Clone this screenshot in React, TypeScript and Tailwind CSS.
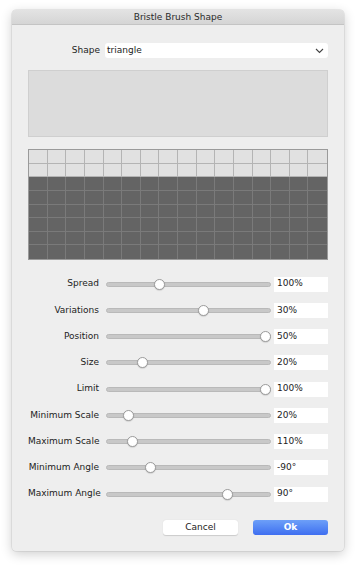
import React from "react";

const rows: { label: string; value: string; pos: number }[] = [
  { label: "Spread", value: "100%", pos: 0.31 },
  { label: "Variations", value: "30%", pos: 0.6 },
  { label: "Position", value: "50%", pos: 1 },
  { label: "Size", value: "20%", pos: 0.2 },
  { label: "Limit", value: "100%", pos: 1 },
  { label: "Minimum Scale", value: "20%", pos: 0.11 },
  { label: "Maximum Scale", value: "110%", pos: 0.135 },
  { label: "Minimum Angle", value: "-90\u00b0", pos: 0.25 },
  { label: "Maximum Angle", value: "90\u00b0", pos: 0.75 },
];

function Slider({ pos }: { pos: number }) {
  return (
    <div className="relative w-[165px] h-[12px] flex items-center">
      <div className="w-full h-[5px] rounded-full bg-[#c8c8c8] border border-[#b9b9b9]" />
      <div
        className="absolute top-[0.5px] w-[11px] h-[11px] rounded-full bg-white border border-[#9d9d9d] shadow-[0_0.5px_1px_rgba(0,0,0,0.2)]"
        style={{ left: `${pos * 154}px` }}
      />
    </div>
  );
}

export default function App() {
  const cells = Array.from({ length: 128 }, (_, i) => i);
  return (
    <div
      className="w-[356px] h-[566px] bg-white pt-[10px] pl-[12px]"
      style={{ fontFamily: '"DejaVu Sans", "Liberation Sans", sans-serif' }}
    >
      <div className="w-[332px] h-[541px] bg-[#eeeeee] rounded-[4px] shadow-[0_3px_12px_rgba(0,0,0,0.2),0_0_0_0.5px_rgba(0,0,0,0.12)] flex flex-col overflow-hidden">
        <div className="h-[15px] bg-gradient-to-b from-[#e3e3e3] to-[#d5d5d5] border-b border-[#c4c4c4] flex items-center justify-center text-[9px] leading-none text-[#2a2a2a]">
          Bristle Brush Shape
        </div>
        <div className="px-4 flex flex-col">
          <div className="mt-[18px] flex items-center gap-[5px] h-[15px]">
            <div className="w-[72px] text-right text-[9px] text-[#222]">Shape</div>
            <div className="w-[223px] h-[15px] bg-white rounded-[3px] flex items-center justify-between pl-[2px] pr-[4px] text-[9px] text-[#222]">
              <span>triangle</span>
              <svg width="9" height="6" viewBox="0 0 9 6">
                <polyline points="1,1 4.5,4.5 8,1" fill="none" stroke="#444" strokeWidth="1.1" />
              </svg>
            </div>
          </div>
          <div className="mt-[12px] w-[300px] h-[67px] bg-[#dcdcdc] border border-[#cfcfcf]" />
          <div className="mt-[12px] w-[300px] h-[111px] border border-[#9a9a9a] grid grid-cols-16 grid-rows-8">
            {cells.map((i) => {
              const row = Math.floor(i / 16);
              const col = i % 16;
              const dark = row >= 2;
              return (
                <div
                  key={i}
                  className={
                    (dark ? "bg-[#646464] border-[#7a7a7a] " : "bg-[#e1e1e1] border-[#b4b4b4] ") +
                    (col < 15 ? "border-r " : "") +
                    (row < 7 ? "border-b" : "")
                  }
                />
              );
            })}
          </div>
          <div className="mt-[11px] flex flex-col">
            {rows.map((r) => (
              <div key={r.label} className="h-[26.25px] flex items-center">
                <div className="w-[71px] text-right text-[9px] text-[#222] whitespace-nowrap">{r.label}</div>
                <div className="ml-[7px]">
                  <Slider pos={r.pos} />
                </div>
                <div className="ml-[3px] w-[54px] h-[15px] bg-white flex items-center pl-[3px] text-[9px] text-[#222]">
                  {r.value}
                </div>
              </div>
            ))}
          </div>
          <div className="mt-[13px] flex justify-end gap-[15px]">
            <div className="w-[75px] h-[15px] bg-white rounded-[3px] shadow-[0_0.5px_1px_rgba(0,0,0,0.15)] flex items-center justify-center text-[9px] text-[#222]">
              Cancel
            </div>
            <div className="w-[75px] h-[15px] rounded-[3px] bg-gradient-to-b from-[#6d9ff8] to-[#3f6ef0] flex items-center justify-center text-[9px] font-semibold text-white">
              Ok
            </div>
          </div>
        </div>
      </div>
    </div>
  );
}
